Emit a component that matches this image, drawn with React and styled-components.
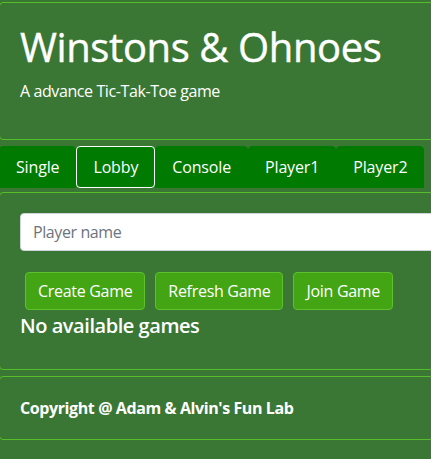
import styled, { createGlobalStyle } from "styled-components";

const GlobalStyle = createGlobalStyle`
  html, body {
    margin: 0;
    padding: 0;
    overflow: hidden;
    background: #3a7734;
    font-family: "Open Sans", "Noto Sans", sans-serif;
    letter-spacing: -0.4px;
    color: #fff;
  }
`;

const tabs = ["Single", "Lobby", "Console", "Player1", "Player2"];
const actions = ["Create Game", "Refresh Game", "Join Game"];

export default function App() {
  return (
    <>
      <GlobalStyle />
      <Page>
        <Card>
          <Title>Winstons &amp; Ohnoes</Title>
          <Lead>A advance Tic-Tak-Toe game</Lead>
        </Card>
        <TabBar>
          {tabs.map((t) => (
            <Tab key={t} $active={t === "Lobby"}>
              {t}
            </Tab>
          ))}
        </TabBar>
        <Card>
          <NameInput placeholder="Player name" />
          <ButtonRow>
            {actions.map((a) => (
              <Button key={a} type="button">
                {a}
              </Button>
            ))}
          </ButtonRow>
          <Status>No available games</Status>
        </Card>
        <Card $footer>
          <Copyright>Copyright @ Adam &amp; Alvin's Fun Lab</Copyright>
        </Card>
      </Page>
    </>
  );
}

const Page = styled.div`
  width: 460px;
  margin-left: -1px;
  padding-top: 2px;
  display: flex;
  flex-direction: column;
`;

const Card = styled.div`
  border: 1px solid #56bd2a;
  border-radius: 4px;
  padding: ${(p) => (p.$footer ? "19px 20px" : "20px 20px")};
  margin-bottom: 6px;
`;

const Title = styled.h1`
  margin: 0 0 8px;
  font-size: 40px;
  font-weight: 400;
  line-height: 48px;
  letter-spacing: -0.4px;
  -webkit-text-stroke: 0.4px #fff;
`;

const Lead = styled.p`
  margin: 0 0 16px;
  font-size: 16px;
  line-height: 24px;
`;

const TabBar = styled.div`
  display: flex;
  margin-bottom: 4px;
`;

const Tab = styled.div`
  background: #007a00;
  border: 1px solid ${(p) => (p.$active ? "#ffffff" : "#007a00")};
  border-radius: ${(p) => (p.$active ? "4px" : "4px 4px 0 0")};
  padding: 8px 16px;
  font-size: 16px;
  line-height: 24px;
  letter-spacing: -0.15px;
  color: #fff;
`;

const NameInput = styled.input`
  display: block;
  box-sizing: border-box;
  width: 100%;
  height: 38px;
  padding: 6px 12px;
  border: 1px solid #ced4da;
  border-radius: 4px;
  font-family: inherit;
  letter-spacing: inherit;
  font-size: 16px;
  color: #495057;
  background: #fff;
  &::placeholder {
    color: #6c757d;
  }
`;

const ButtonRow = styled.div`
  display: flex;
  gap: 10px;
  padding: 0 5px;
  margin-top: 21px;
`;

const Button = styled.button`
  background: #43a414;
  border: 1px solid #5cc02f;
  border-radius: 4px;
  padding: 6px 12px;
  font-family: inherit;
  letter-spacing: -0.3px;
  font-size: 16px;
  line-height: 24px;
  color: #fff;
`;

const Status = styled.h5`
  margin: 4px 0 11px;
  font-size: 20px;
  font-weight: 600;
  line-height: 24px;
  letter-spacing: -0.45px;
`;

const Copyright = styled.div`
  font-size: 16px;
  font-weight: 700;
  line-height: 24px;
`;
